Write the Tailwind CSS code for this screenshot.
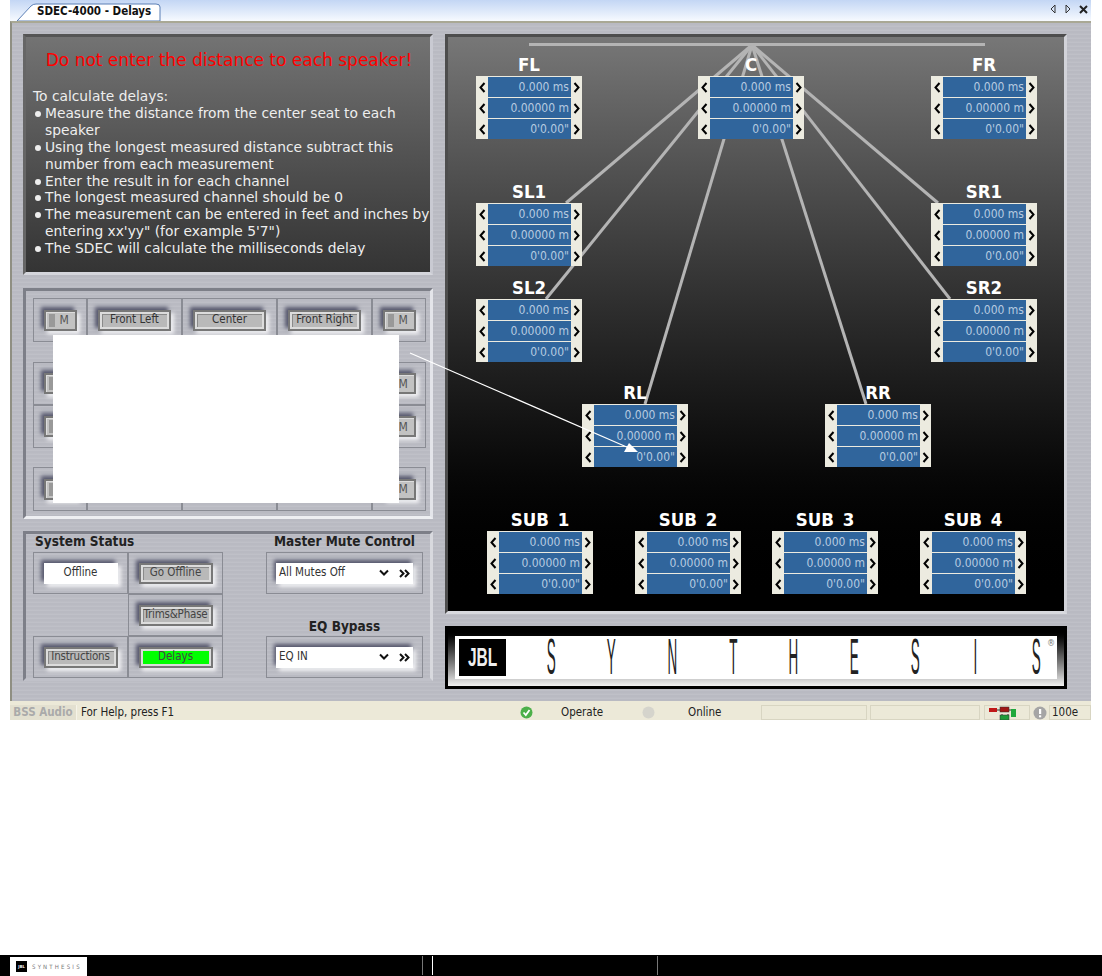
<!DOCTYPE html>
<html>
<head>
<meta charset="utf-8">
<script src="https://cdn.jsdelivr.net/npm/@tailwindcss/browser@4"></script>
</head>
<body class="bg-white">
<div id="root" class="relative w-[1102px] h-[976px] overflow-hidden bg-white font-['DejaVu_Sans_Condensed','DejaVu_Sans',sans-serif] text-[11.5px] text-[#333]">

  <!-- app window -->
  <div class="ml-[10px] w-[1081px] h-[720px] flex flex-col">
    <!-- tab strip -->
    <div class="relative h-[21px] flex items-end bg-gradient-to-b from-[#c3d6f4] to-[#f7faff]">
      <div class="relative ml-[7px] w-[143px] h-[18px] flex items-center pl-[20px] font-bold text-[11.5px] text-[#111]">
        <svg class="absolute left-0 top-0" width="144" height="18" viewBox="0 0 144 18"><path d="M0 18 L14 3 Q16 1 19 1 L139 1 Q143 1 143 4 L143 18 Z" fill="#fff" stroke="#5b7fb5"/></svg>
        <span class="relative">SDEC-4000 - Delays</span>
      </div>
      <div class="ml-auto mr-[3px] mb-[7px] flex items-center gap-[7px]">
        <svg width="8" height="10" viewBox="0 0 8 10"><path d="M6 1 L2 5 L6 9 Z" fill="none" stroke="#333"/></svg>
        <svg width="8" height="10" viewBox="0 0 8 10"><path d="M2 1 L6 5 L2 9 Z" fill="none" stroke="#333"/></svg>
        <svg width="9" height="9" viewBox="0 0 9 9"><path d="M1 1 L8 8 M8 1 L1 8" stroke="#222" stroke-width="2"/></svg>
      </div>
    </div>

    <!-- body -->
    <div class="h-[680px] flex border-t-2 border-l-2 border-t-[#a9a894] border-l-[#8f8f82] pl-[11px] pt-[11px] gap-[12px] bg-[repeating-linear-gradient(0deg,#b9bac2_0px,#b9bac2_2px,#c5c6cd_3px,#b2b3bb_4px)]">

      <!-- left column -->
      <div class="w-[410px] flex flex-col">
        <!-- instructions -->
        <div class="h-[241px] border-[3px] border-t-[#555] border-l-[#666] border-r-[#c9cad2] border-b-[#d5d6dc] bg-gradient-to-b from-[#737373] to-[#343434] pl-[7px] font-['DejaVu_Sans',sans-serif] text-[#eee] text-[13.8px] leading-[16.9px]">
          <div class="mt-[13px] mb-[17px] pr-[5px] text-center text-[#f00] text-[17px] leading-[21px]">Do not enter the distance to each speaker!</div>
          <div>To calculate delays:</div>
          <ul>
            <li class="flex"><span class="ml-[2px] mr-[4px] mt-[6px] w-[6px] h-[6px] rounded-full bg-[#eee] shrink-0"></span><span>Measure the distance from the center seat to each speaker</span></li>
            <li class="flex"><span class="ml-[2px] mr-[4px] mt-[6px] w-[6px] h-[6px] rounded-full bg-[#eee] shrink-0"></span><span>Using the longest measured distance subtract this number from each measurement</span></li>
            <li class="flex"><span class="ml-[2px] mr-[4px] mt-[6px] w-[6px] h-[6px] rounded-full bg-[#eee] shrink-0"></span><span>Enter the result in for each channel</span></li>
            <li class="flex"><span class="ml-[2px] mr-[4px] mt-[6px] w-[6px] h-[6px] rounded-full bg-[#eee] shrink-0"></span><span>The longest measured channel should be 0</span></li>
            <li class="flex"><span class="ml-[2px] mr-[4px] mt-[6px] w-[6px] h-[6px] rounded-full bg-[#eee] shrink-0"></span><span>The measurement can be entered in feet and inches by entering xx'yy" (for example 5'7")</span></li>
            <li class="flex"><span class="ml-[2px] mr-[4px] mt-[6px] w-[6px] h-[6px] rounded-full bg-[#eee] shrink-0"></span><span>The SDEC will calculate the milliseconds delay</span></li>
          </ul>
        </div>

        <!-- channel buttons -->
        <div id="channels" class="mt-[13px] h-[231px] border-[3px] border-t-[#7d7f88] border-l-[#7d7f88] border-r-[#e4e5ea] border-b-[#eeeff2] pl-[7px] pt-[7px]"></div>

        <!-- system status -->
        <div class="mt-[12px] h-[150px] border-[3px] border-t-[#7d7f88] border-l-[#7d7f88] border-r-[#d8d9de] border-b-[#c0c1c9] pl-[7px] pr-[7px] flex justify-between">
          <div class="w-[190px]">
            <div class="h-[18px] leading-[14px] pl-[2px] font-bold text-[13.5px] text-[#222]">System Status</div>
            <div class="grid grid-cols-[95px_95px] grid-rows-[42px_42px_42px]">
              <div class="border border-[#8a8c94] flex items-center justify-center"><div class="w-[74px] h-[21px] bg-white shadow-[-3px_-3px_4px_#55576c,3px_3px_4px_#f4f4f6] flex items-center justify-center">Offline</div></div>
              <div class="border border-[#8a8c94] flex items-center justify-center"><div class="w-[74px] h-[21px] border-2 border-[#777] bg-[#b9b9b9] shadow-[-3px_-3px_4px_#55576c,3px_3px_4px_#f4f4f6,inset_0_0_0_2px_#dcdcdc,inset_3px_3px_0_#8a8a8a] flex items-center justify-center text-[#444]">Go Offline</div></div>
              <div></div>
              <div class="border border-[#8a8c94] flex items-center justify-center"><div class="w-[74px] h-[21px] border-2 border-[#777] bg-[#b9b9b9] shadow-[-3px_-3px_4px_#55576c,3px_3px_4px_#f4f4f6,inset_0_0_0_2px_#dcdcdc,inset_3px_3px_0_#8a8a8a] flex items-center justify-center text-[#444] tracking-[-0.2px]">Trims&amp;Phase</div></div>
              <div class="border border-[#8a8c94] flex items-center justify-center"><div class="w-[74px] h-[21px] border-2 border-[#777] bg-[#b9b9b9] shadow-[-3px_-3px_4px_#55576c,3px_3px_4px_#f4f4f6,inset_0_0_0_2px_#dcdcdc,inset_3px_3px_0_#8a8a8a] flex items-center justify-center text-[#444] tracking-[-0.2px]">Instructions</div></div>
              <div class="border border-[#8a8c94] flex items-center justify-center"><div class="w-[74px] h-[21px] border-2 border-[#777] bg-[#0f0] shadow-[-3px_-3px_4px_#55576c,3px_3px_4px_#f4f4f6,inset_0_0_0_2px_#dcdcdc] flex items-center justify-center text-[#444]">Delays</div></div>
            </div>
          </div>
          <div class="w-[157px]">
            <div class="h-[18px] leading-[14px] text-center font-bold text-[13.5px] text-[#222]">Master Mute Control</div>
            <div class="h-[42px] border border-[#8a8c94] flex items-center justify-center">
              <div class="w-[137px] h-[21px] bg-white shadow-[-2px_-3px_4px_#55576c,3px_3px_4px_#f4f4f6] flex items-center pl-[3px] pr-[3px]">
                <span class="flex-1">All Mutes Off</span>
                <svg width="10" height="8" viewBox="0 0 10 8"><path d="M1 1.5 L5 5.5 L9 1.5" fill="none" stroke="#111" stroke-width="2"/></svg>
                <svg class="ml-[10px]" width="11" height="9" viewBox="0 0 11 9"><path d="M1 1 L4.5 4.5 L1 8 M6 1 L9.5 4.5 L6 8" fill="none" stroke="#111" stroke-width="2"/></svg>
              </div>
            </div>
            <div class="h-[42px] pt-[23px] leading-[18px] text-center font-bold text-[13.5px] text-[#222]">EQ Bypass</div>
            <div class="h-[42px] border border-[#8a8c94] flex items-center justify-center">
              <div class="w-[137px] h-[21px] bg-white shadow-[-2px_-3px_4px_#55576c,3px_3px_4px_#f4f4f6] flex items-center pl-[3px] pr-[3px]">
                <span class="flex-1">EQ IN</span>
                <svg width="10" height="8" viewBox="0 0 10 8"><path d="M1 1.5 L5 5.5 L9 1.5" fill="none" stroke="#111" stroke-width="2"/></svg>
                <svg class="ml-[10px]" width="11" height="9" viewBox="0 0 11 9"><path d="M1 1 L4.5 4.5 L1 8 M6 1 L9.5 4.5 L6 8" fill="none" stroke="#111" stroke-width="2"/></svg>
              </div>
            </div>
          </div>
        </div>
      </div>

      <!-- right column -->
      <div class="w-[622px] flex flex-col">
        <div id="diagram" class="relative h-[580px] border-[3px] border-t-[#4d4d4d] border-l-[#4d4d4d] border-r-[#d2d3d9] border-b-[#d8d9de] bg-gradient-to-b from-[#777] to-[#000]">
          <!-- coordinates in the svg are relative to the panel's padding box -->
          <svg class="absolute left-0 top-0" width="616" height="574" viewBox="448 37 616 574">
            <g stroke="#b4b4b4" stroke-width="3" fill="none">
              <path d="M529 44.5 H985"/>
              <path d="M752 45 L566 203"/>
              <path d="M752 45 L546 299"/>
              <path d="M752 45 L645 404"/>
              <path d="M752 45 L866 404"/>
              <path d="M752 45 L950 299"/>
              <path d="M752 45 L938 203"/>
            </g>
          </svg>
        </div>

        <!-- logo -->
        <div class="mt-[12px] h-[63px] bg-black p-[3px]">
          <div class="h-[57px] bg-gradient-to-b from-black via-[#555] via-[45%] to-[#f2f2f2] px-[7px] pt-[7px]">
            <div class="relative h-[43px] bg-white flex items-center text-[#222]">
              <div class="ml-[4px] w-[47px] h-[37px] bg-black text-[#eee] font-['Liberation_Sans',sans-serif] font-bold text-[25px] flex items-center justify-center"><span class="scale-x-[.62]">JBL</span></div>
              <div class="ml-[14.6px] flex font-['Liberation_Sans',sans-serif] text-[50px] leading-[43px]">
                <span class="w-[60.7px] text-center scale-x-[.27]">S</span>
                <span class="w-[60.7px] text-center scale-x-[.27]">Y</span>
                <span class="w-[60.7px] text-center scale-x-[.27]">N</span>
                <span class="w-[60.7px] text-center scale-x-[.27]">T</span>
                <span class="w-[60.7px] text-center scale-x-[.27]">H</span>
                <span class="w-[60.7px] text-center scale-x-[.27]">E</span>
                <span class="w-[60.7px] text-center scale-x-[.27]">S</span>
                <span class="w-[60.7px] text-center scale-x-[.27]">I</span>
                <span class="w-[60.7px] text-center scale-x-[.27]">S</span>
              </div>
              <span class="absolute left-[592px] top-[1px] text-[9px] text-[#777]">®</span>
            </div>
          </div>
        </div>
      </div>
    </div>

    <!-- status bar -->
    <div class="h-[19px] pt-[4px] bg-[#ece9d8] flex items-center text-[#222]">
      <div class="w-[67px] h-full bg-[#e3e0d0] border-r border-[#f5f3e8] flex items-center justify-center font-bold text-[#aaa]">BSS Audio</div>
      <div class="w-[439px] pl-[4px]">For Help, press F1</div>
      <div class="w-[45px] pl-[4px]">
        <svg width="13" height="13" viewBox="0 0 13 13"><circle cx="6.5" cy="6.5" r="6" fill="#4cb04a"/><path d="M3.5 6.5 L5.8 9 L9.5 4" fill="none" stroke="#fff" stroke-width="1.8"/></svg>
      </div>
      <div class="w-[81px]">Operate</div>
      <div class="w-[46px]"><svg width="13" height="13" viewBox="0 0 13 13"><circle cx="6.5" cy="6.5" r="6" fill="#d5d4cc"/></svg></div>
      <div class="w-[73px]">Online</div>
      <div class="w-[106px] h-full border border-[#d8d5c2]"></div>
      <div class="ml-[3px] w-[110px] h-full border border-[#d8d5c2]"></div>
      <div class="ml-[4px] w-[46px] h-full border border-[#d8d5c2] flex items-center pl-[4px]">
        <svg width="30" height="14" viewBox="0 0 30 14"><path d="M8 4 H22 M13 8 V13 H19 V8" fill="none" stroke="#333"/><rect x="0" y="2" width="8" height="4" fill="#c01818"/><rect x="11" y="1" width="9" height="5" fill="#a01515" stroke="#333" stroke-width=".5"/><rect x="11" y="9" width="9" height="5" fill="#1f9b3a" stroke="#333" stroke-width=".5"/><rect x="22" y="3" width="5" height="8" fill="#1fa83c"/></svg>
      </div>
      <div class="w-[19px] h-full flex items-center justify-center">
        <svg width="14" height="14" viewBox="0 0 14 14"><circle cx="7" cy="7" r="6.5" fill="#a5a5a5"/><rect x="6" y="3" width="2.2" height="5" fill="#fff"/><rect x="6" y="9.3" width="2.2" height="2" fill="#fff"/></svg>
      </div>
      <div class="w-[42px] h-full border border-[#d8d5c2] flex items-center pl-[2px]">100e</div>
    </div>
  </div>

  <div class="h-[235px]"></div>

  <!-- footer bar -->
  <div class="h-[21px] bg-black flex">
    <div class="ml-[10px] w-[77px] h-[19px] mt-[2px] bg-white flex items-center pl-[6px] gap-[5px]">
      <div class="w-[11px] h-[11px] bg-black text-white text-[4px] font-bold flex items-center justify-center">JBL</div>
      <span class="text-[6px] tracking-[2.2px] text-[#777] leading-none">SYNTHESIS</span>
    </div>
    <div class="w-[336px] border-r border-[#777] my-[1px]"></div>
    <div class="w-[10px] border-r border-white my-[1px]"></div>
    <div class="w-[225px] border-r border-[#777] my-[1px]"></div>
  </div>

  <!-- annotation over the screenshot -->
  <div class="absolute left-[53px] top-[335px] w-[346px] h-[168px] bg-white"></div>
  <svg class="absolute left-0 top-0 pointer-events-none" width="1102" height="976" viewBox="0 0 1102 976">
    <path d="M410 353 L629 448" stroke="#fff" stroke-width="1.2"/>
    <polygon points="629,443 624,452 638,452" fill="#fff"/>
  </svg>
</div>

<script>
  // speaker boxes on the diagram panel [label, x, y] in page pixels
  const nodes = [
    ['FL', 476, 76], ['C', 698, 76], ['FR', 931, 76],
    ['SL1', 476, 203], ['SR1', 931, 203],
    ['SL2', 476, 299], ['SR2', 931, 299],
    ['RL', 582, 404], ['RR', 825, 404],
    ['SUB 1', 487, 531], ['SUB 2', 635, 531], ['SUB 3', 772, 531], ['SUB 4', 920, 531]
  ];
  const left = '<svg class="mx-auto" width="7" height="11" viewBox="0 0 7 11"><path d="M5.5 1 L1.5 5.5 L5.5 10" fill="none" stroke="#000" stroke-width="2"/></svg>';
  const right = '<svg class="mx-auto" width="7" height="11" viewBox="0 0 7 11"><path d="M1.5 1 L5.5 5.5 L1.5 10" fill="none" stroke="#000" stroke-width="2"/></svg>';
  const diagram = document.getElementById('diagram');
  for (const [name, x, y] of nodes) {
    const rows = ['0.000 ms', '0.00000 m', '0\'0.00"'].map(v => `
      <div class="flex h-[20px] items-center">
        <div class="w-[11px]">${left}</div>
        <div class="w-[83px] h-full bg-[#30659c] text-[#b7cbe0] text-right pr-[2px] text-[12px] leading-[20px]">${v}</div>
        <div class="w-[11px]">${right}</div>
      </div>`).join('');
    diagram.insertAdjacentHTML('beforeend', `
      <div class="absolute w-[106px] h-[63px] bg-[#ecebe0] pt-px pl-px flex flex-col gap-px" style="left:${x - 448}px;top:${y - 37}px">
        <div class="absolute left-0 right-0 bottom-full text-center text-white font-bold text-[18.5px] leading-[22px] [word-spacing:3px]">${name}</div>
        ${rows}
      </div>`);
  }

  // channel rows, the middle ones sit under the white box
  const channels = document.getElementById('channels');
  const mute = '<div class="w-[33px] h-[21px] border-2 border-[#777] bg-[#c2c2c2] shadow-[-3px_-3px_4px_#55576c,3px_3px_4px_#f4f4f6,inset_1px_1px_0_#ddd] flex items-center pl-[3px] gap-[5px] text-[#555] text-[12px]"><span class="w-[6px] h-[13px] bg-[#999]"></span>M</div>';
  const chan = t => `<div class="w-[73px] h-[21px] border-2 border-[#777] bg-[#b9b9b9] shadow-[-3px_-3px_4px_#55576c,3px_3px_4px_#f4f4f6,inset_0_0_0_2px_#dcdcdc,inset_3px_3px_0_#8a8a8a] flex items-center justify-center text-[#333]">${t}</div>`;
  const cell = c => `<div class="border border-[#8a8c94] flex items-center justify-center">${c}</div>`;
  const layout = [
    ['h-[44px]', 'Front Left', 'Center', 'Front Right'],
    ['h-[43px] mt-[20px]', '', '', ''],
    ['h-[43px]', '', '', ''],
    ['h-[44px] mt-[19px]', '', '', '']
  ];
  for (const [size, a, b, c] of layout) {
    channels.insertAdjacentHTML('beforeend', `
      <div class="grid grid-cols-[54px_95px_95px_95px_54px] ${size}">
        ${cell(mute)}${cell(a ? chan(a) : '')}${cell(b ? chan(b) : '')}${cell(c ? chan(c) : '')}${cell(mute)}
      </div>`);
  }
</script>
</body>
</html>
